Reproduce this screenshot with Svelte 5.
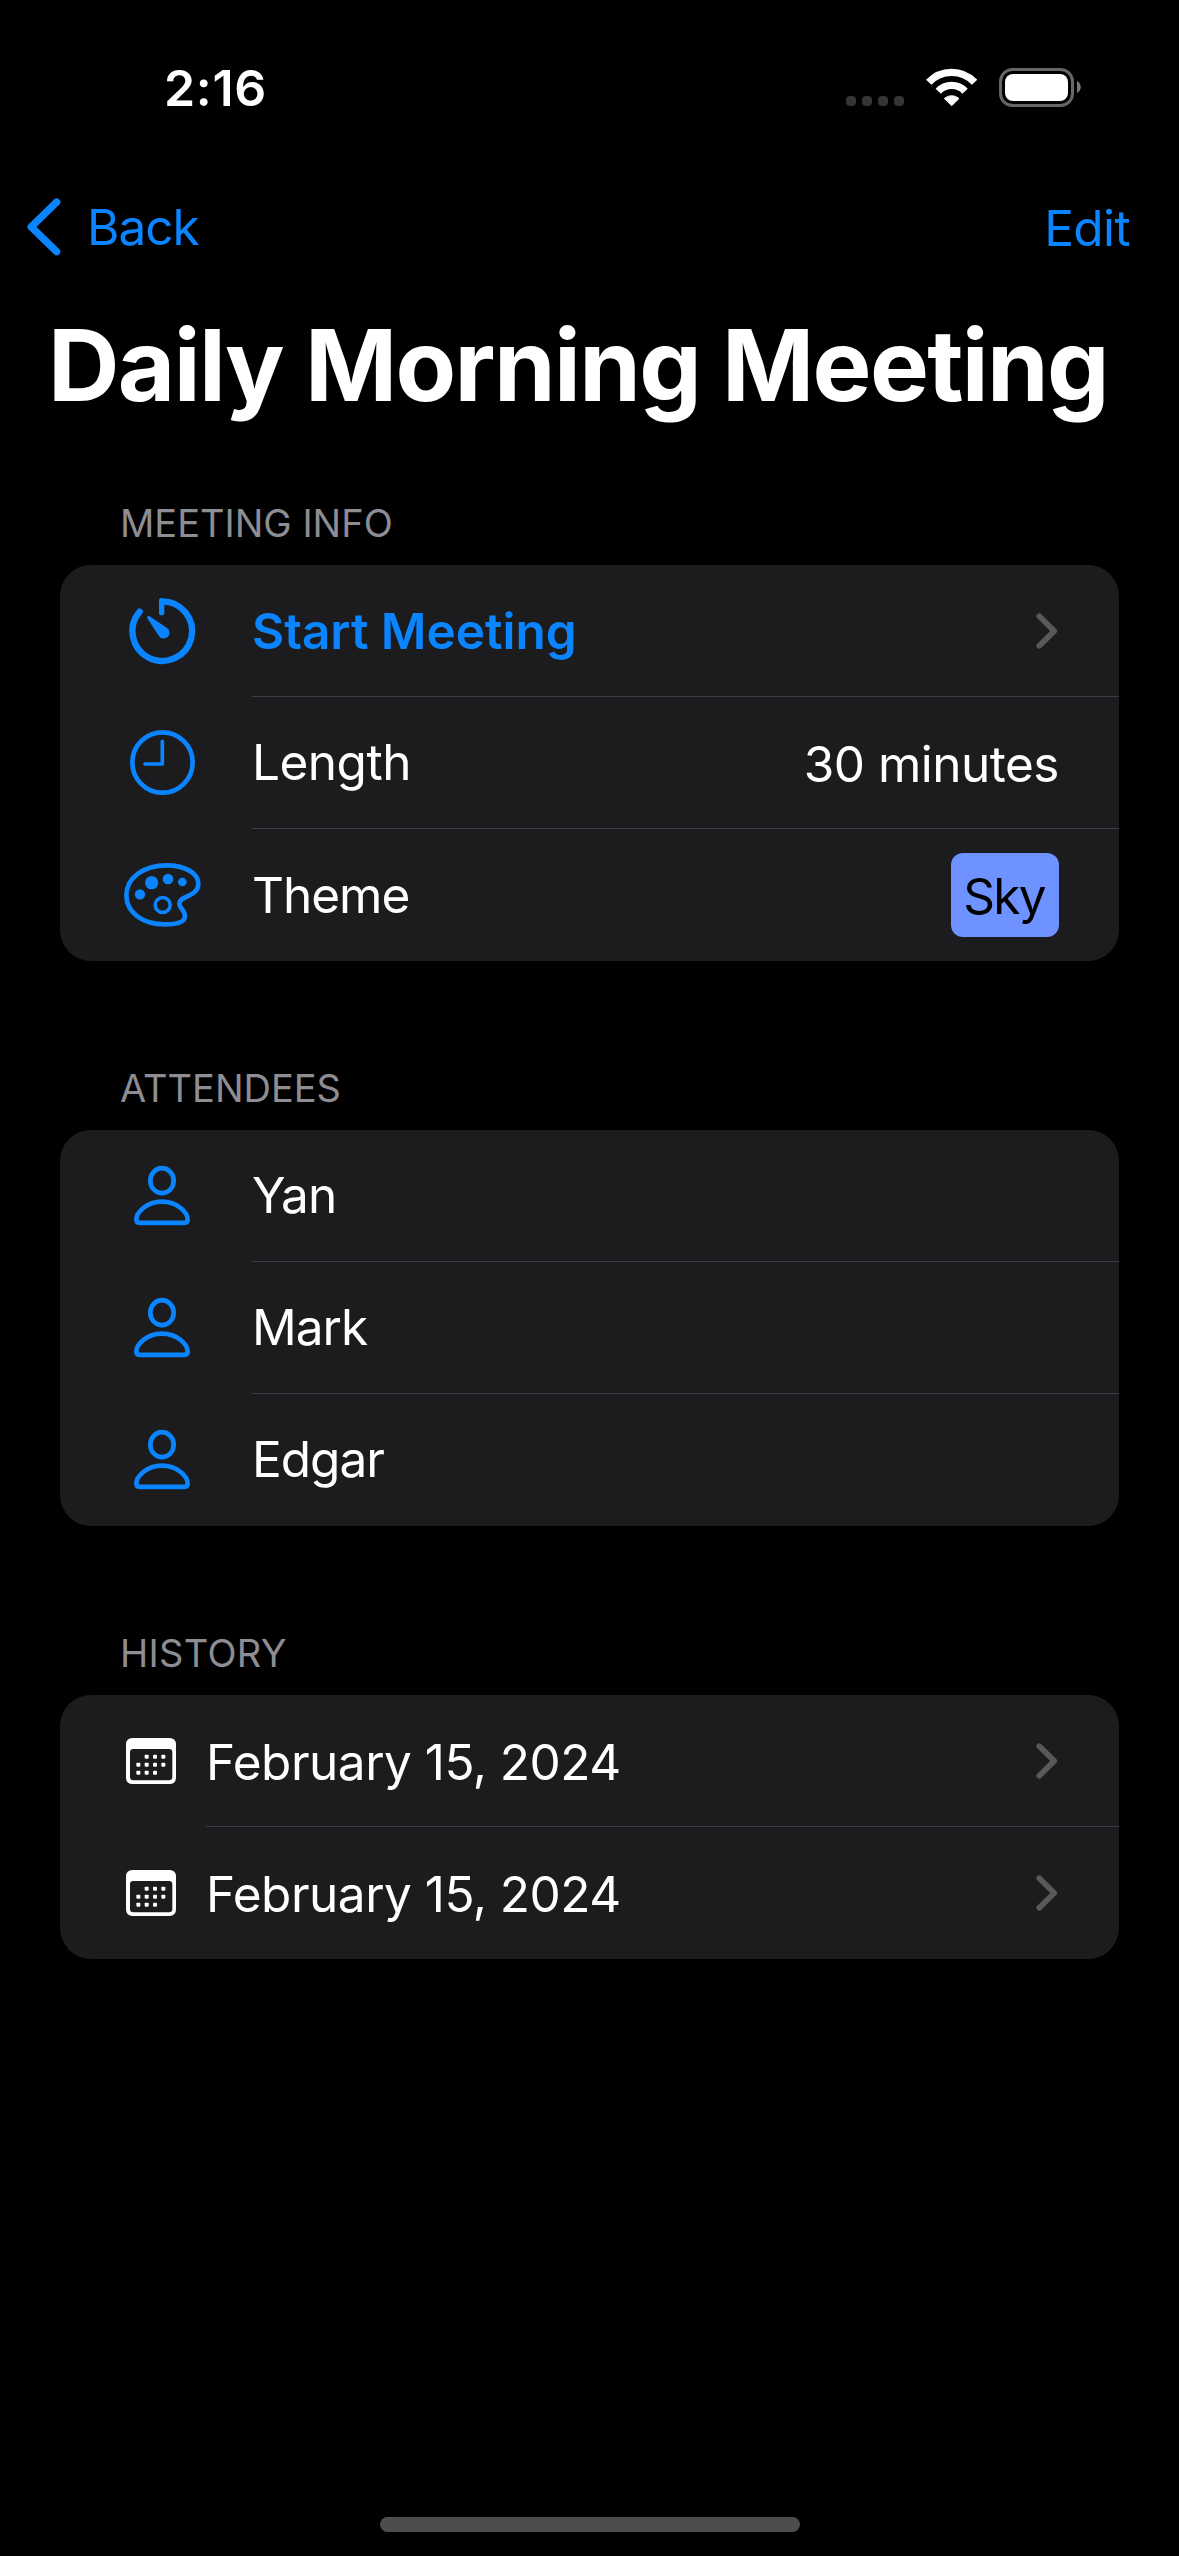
<script>
  const attendees = ['Yan', 'Mark', 'Edgar'];
  const history = ['February 15, 2024', 'February 15, 2024'];
  const calendarDots = [
    [110, 110], [135, 110], [160, 110],
    [85, 134], [110, 134], [135, 134], [160, 134],
    [85, 158], [110, 158], [135, 158]
  ];
</script>

{#snippet disclosure()}
  <svg class="disclosure" viewBox="0 0 22 36" aria-hidden="true">
    <path d="M3.3 3.3 L18.2 18 L3.3 32.7" />
  </svg>
{/snippet}

<div class="screen">
  <header class="status">
    <span class="time">2:16</span>
    <div class="indicators">
      <div class="signal"><i></i><i></i><i></i><i></i></div>
      <svg class="wifi" viewBox="438 84 153 117" aria-hidden="true">
        <path class="band" d="M446.3 126.9 A94 94 0 0 1 583.7 126.9" />
        <path class="band" d="M474.8 153.5 A55 55 0 0 1 555.2 153.5" />
        <path class="core" d="M515 197 L493 175.5 A33 33 0 0 1 537 175.5 Z" />
      </svg>
      <svg class="battery" viewBox="0 0 82 39" aria-hidden="true">
        <rect class="shell" x="1.5" y="1.5" width="72" height="36" rx="12" />
        <rect class="charge" x="6" y="6" width="63" height="27" rx="8" />
        <path class="nub" d="M78 13 C83 15 83 23 78 25 Z" />
      </svg>
    </div>
  </header>

  <nav>
    <a class="back" href="#back">
      <svg viewBox="0 0 36 60" aria-hidden="true"><path d="M29.6 5.2 L4.2 29.9 L29.6 54.6" /></svg>
      <span>Back</span>
    </a>
    <a class="edit" href="#edit">Edit</a>
  </nav>

  <h1>Daily Morning Meeting</h1>

  <section>
    <h2>MEETING INFO</h2>
    <div class="card">
      <div class="row">
        <svg class="icon" viewBox="0 -45 330 396" aria-hidden="true">
          <path class="line timer" d="M156 64 A89.5 89.5 0 1 1 89 95" />
          <path class="line stem" d="M155 98 V62" />
          <path class="solid" d="M112 115 C109 109 114 106 119 109 L170 143 A17.5 17.5 0 1 1 146 167 Z" />
        </svg>
        <div class="content">
          <span class="start">Start Meeting</span>
          {@render disclosure()}
        </div>
      </div>
      <div class="row">
        <svg class="icon" viewBox="0 0 330 396" aria-hidden="true">
          <circle class="line" cx="157.5" cy="196.5" r="90.5" />
          <path class="line hands" d="M157 133 V201 H105" />
        </svg>
        <div class="content">
          <span class="label">Length</span>
          <span class="value">30 minutes</span>
        </div>
      </div>
      <div class="row">
        <svg class="icon" viewBox="0 -33 330 396" aria-hidden="true">
          <path class="line" d="M170 76 C222 76 265 98 265 131 C265 152 250 161 232 169 C218 175 208 180 208 191 C208 206 225 209 225 228 C225 245 203 253 165 253 C98 253 49 218 49 166 C49 112 102 76 170 76 Z" />
          <circle class="solid" cx="125" cy="128" r="20" />
          <circle class="solid" cx="174" cy="117" r="16" />
          <circle class="solid" cx="217" cy="126" r="13" />
          <circle class="solid" cx="90" cy="163" r="15.5" />
          <circle class="line ring" cx="158" cy="195" r="22.5" />
        </svg>
        <div class="content">
          <span class="snug">Theme</span>
          <span class="badge">Sky</span>
        </div>
      </div>
    </div>
  </section>

  <section>
    <h2>ATTENDEES</h2>
    <div class="card">
      {#each attendees as name}
        <div class="row">
          <svg class="icon" viewBox="0 -30 330 396" aria-hidden="true">
            <ellipse class="line" cx="156" cy="122" rx="35" ry="37.5" />
            <path class="line" d="M92 248.5 H220 C229 248.5 233 245 233 239 C233 218 203 185 156 185 C109 185 79 218 79 239 C79 245 83 248.5 92 248.5 Z" />
          </svg>
          <div class="content"><span class="label snug">{name}</span></div>
        </div>
      {/each}
    </div>
  </section>

  <section>
    <h2 class="wide">HISTORY</h2>
    <div class="card">
      {#each history as date}
        <div class="row">
          <svg class="calendar" viewBox="0 -75 288 396" aria-hidden="true">
            <path
              fill-rule="evenodd"
              d="M68 54 H178 Q198 54 198 74 V172 Q198 192 178 192 H68 Q48 192 48 172 V74 Q48 54 68 54 Z M70 87 Q60 87 60 97 V171 Q60 181 70 181 H177 Q187 181 187 171 V97 Q187 87 177 87 Z"
            />
            {#each calendarDots as [x, y]}
              <rect x={x - 6} y={y - 6} width="12" height="12" rx="2.5" />
            {/each}
          </svg>
          <div class="content">
            <span class="date">{date}</span>
            {@render disclosure()}
          </div>
        </div>
      {/each}
    </div>
  </section>

  <div class="home"></div>
</div>

<style>
  :global(body) {
    background: #000;
  }

  .screen {
    --blue: #0a84ff;
    box-sizing: border-box;
    display: flex;
    flex-direction: column;
    width: 1179px;
    height: 2556px;
    padding-bottom: 24px;
    overflow: hidden;
    background: #000;
    color: #fff;
    font: 400 49.5px/60px Inter, 'Liberation Sans', sans-serif;
    letter-spacing: -0.5px;
    white-space: nowrap;
  }

  svg {
    display: block;
    flex: none;
  }

  .status {
    display: flex;
    align-items: center;
    justify-content: space-between;
    height: 39px;
    padding: 68px 98px 0 164px;
  }

  .time {
    font-size: 50px;
    font-weight: 600;
    letter-spacing: 0.7px;
  }

  .indicators {
    display: flex;
    gap: 22px;
    height: 39px;
  }

  .signal {
    display: flex;
    align-items: flex-end;
    gap: 6px;
    height: 38px;
  }

  .signal i {
    width: 10px;
    height: 10px;
    border-radius: 4px;
    background: #353535;
  }

  .wifi {
    width: 51px;
    height: 39px;
  }

  .band {
    fill: none;
    stroke: #fff;
    stroke-width: 22;
  }

  .core {
    fill: #fff;
    stroke: #fff;
    stroke-width: 3;
    stroke-linejoin: round;
  }

  .battery {
    width: 82px;
    height: 39px;
  }

  .shell {
    fill: none;
    stroke: #666;
    stroke-width: 3;
  }

  .charge {
    fill: #fff;
  }

  .nub {
    fill: #777;
  }

  nav {
    display: flex;
    align-items: center;
    justify-content: space-between;
    height: 80px;
    margin-top: 80px;
    padding: 0 49px 0 27px;
  }

  nav a {
    color: var(--blue);
    text-decoration: none;
  }

  .back {
    display: flex;
    align-items: center;
    gap: 24px;
    letter-spacing: -1px;
  }

  .back svg {
    width: 36px;
    height: 60px;
  }

  .back path {
    fill: none;
    stroke: var(--blue);
    stroke-width: 7.4;
    stroke-linecap: round;
    stroke-linejoin: round;
  }

  .edit {
    padding-top: 2px;
    letter-spacing: -0.6px;
  }

  h1 {
    margin: 38px 0 0 48px;
    font-size: 99px;
    font-weight: 700;
    line-height: 120px;
    letter-spacing: -1.63px;
  }

  section {
    margin: 104px 60px 0;
  }

  h1 + section {
    margin-top: 75px;
  }

  h2 {
    margin: 0 0 19px 60px;
    color: #8d8d93;
    font-size: 38px;
    font-weight: 400;
    line-height: 46px;
    letter-spacing: 0;
  }

  .wide {
    letter-spacing: 0.3px;
  }

  .card {
    padding-left: 50px;
    border-radius: 31px;
    background: #1c1c1e;
  }

  .row {
    display: flex;
    height: 132px;
  }

  .icon {
    width: 110px;
    height: 132px;
    margin-right: 32px;
  }

  .line {
    fill: none;
    stroke: var(--blue);
    stroke-width: 14;
    stroke-linecap: round;
    stroke-linejoin: round;
  }

  .timer {
    stroke-width: 19;
  }

  .stem {
    stroke-width: 16;
  }

  .hands {
    stroke-width: 11;
  }

  .ring {
    stroke-width: 10.5;
  }

  .solid {
    fill: var(--blue);
  }

  .calendar {
    width: 96px;
    height: 132px;
    fill: #fff;
  }

  .content {
    box-sizing: border-box;
    display: flex;
    flex: 1;
    align-items: center;
    justify-content: space-between;
    padding-right: 60px;
    border-bottom: 1px solid #3d3d41;
  }

  .row:last-child .content {
    border-bottom-color: transparent;
  }

  .start {
    color: var(--blue);
    font-weight: 600;
    letter-spacing: 0;
  }

  .label {
    padding-bottom: 2px;
  }

  .snug {
    letter-spacing: -1px;
  }

  .value,
  .date {
    padding-top: 3px;
  }

  .badge {
    box-sizing: border-box;
    width: 108px;
    height: 84px;
    padding-right: 2px;
    border-radius: 12px;
    background: #6e92ff;
    color: #000;
    line-height: 86px;
    letter-spacing: -1.7px;
    text-align: center;
  }

  .disclosure {
    width: 22px;
    height: 36px;
    margin-right: 1px;
  }

  .disclosure path {
    fill: none;
    stroke: #59595c;
    stroke-width: 5.8;
    stroke-linecap: round;
    stroke-linejoin: round;
  }

  .home {
    width: 420px;
    height: 15px;
    margin: auto auto 0;
    border-radius: 8px;
    background: #4d4d4d;
  }
</style>
